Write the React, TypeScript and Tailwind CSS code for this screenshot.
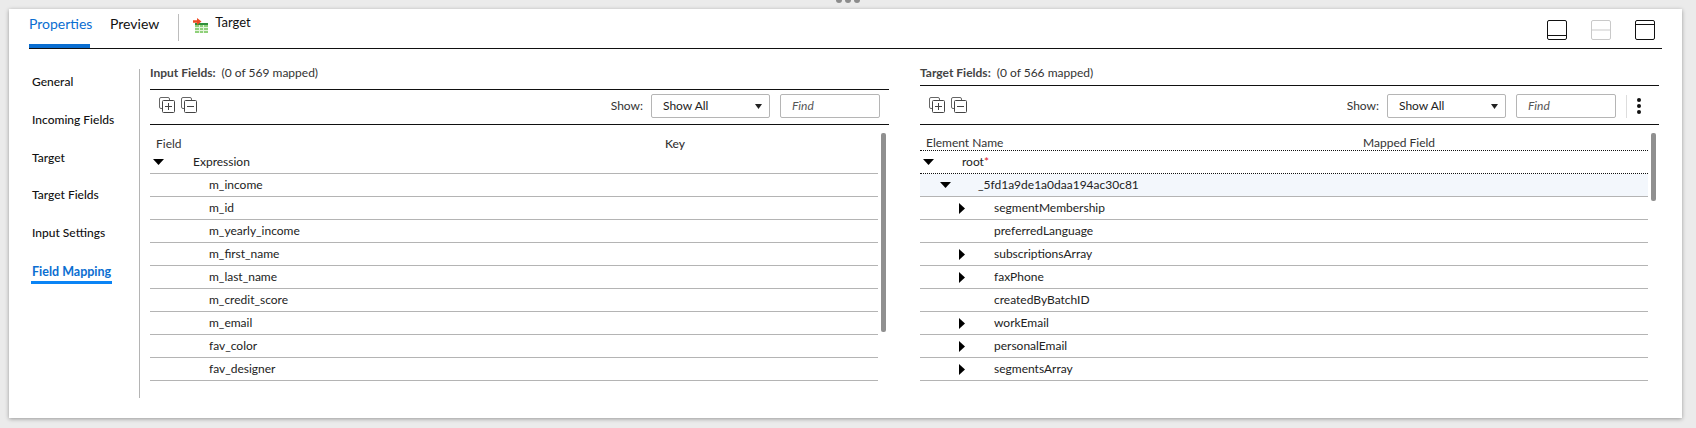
import React from "react";

const font = { fontFamily: "Lato, 'Open Sans', sans-serif" };

function ToolIcon({ minus }: { minus?: boolean }) {
  return (
    <svg width="16" height="16" viewBox="0 0 16 16" fill="none" stroke="#444" strokeWidth="1">
      <path d="M3.5 11.5H2a1.5 1.5 0 0 1-1.5-1.5V2A1.5 1.5 0 0 1 2 .5h7A1.5 1.5 0 0 1 10.5 2v1.5" stroke="#666" />
      <rect x="3.5" y="3.5" width="12" height="12" rx="1" fill="#fff" />
      <path d="M6 9.5h7" />
      {!minus && <path d="M9.5 6v7" />}
    </svg>
  );
}

function Down() {
  return (
    <svg width="11" height="6" viewBox="0 0 11 6">
      <path d="M0 0h11L5.5 6z" fill="#000" />
    </svg>
  );
}

function Right() {
  return (
    <svg width="6" height="11" viewBox="0 0 6 11">
      <path d="M0 0v11l6-5.5z" fill="#000" />
    </svg>
  );
}

function LayoutIcon({ kind }: { kind: "bottom" | "mid" | "top" }) {
  const c = kind === "mid" ? "#c9c9c9" : "#111";
  const y = kind === "bottom" ? 15.5 : kind === "mid" ? 10 : 4.5;
  return (
    <svg width="20" height="20" viewBox="0 0 20 20" fill="none" stroke={c} strokeWidth="1">
      <rect x="0.5" y="0.5" width="19" height="19" rx="1.5" />
      <path d={`M0.5 ${y}H19.5`} />
    </svg>
  );
}

function TargetIcon() {
  return (
    <svg width="15" height="15" viewBox="0 0 15 15">
      <rect x="2" y="5" width="13" height="10" fill="#8fd07a" />
      <rect x="2" y="5" width="13" height="2" fill="#2f8f3a" />
      <path d="M2 9.5h13M2 12.5h13M6.5 7v8M10.5 7v8" stroke="#e4f4dc" strokeWidth="1" />
      <path d="M0 2.2h4V0l4.5 3.5L4 7V4.8H0z" fill="#ee4b23" />
    </svg>
  );
}

function Select({ label }: { label: string }) {
  return (
    <div className="flex items-center">
      <span className="text-[12px] text-[#333] mr-[8px]">{label}</span>
      <div className="w-[119px] h-[24px] border border-[#b5b5b5] rounded-[2px] flex items-center justify-between pl-[11px] pr-[7px] text-[12px] text-[#222]">
        <span>Show All</span>
        <svg width="7" height="5" viewBox="0 0 7 5">
          <path d="M0 0h7L3.5 5z" fill="#222" />
        </svg>
      </div>
    </div>
  );
}

function Find() {
  return (
    <div className="w-[100px] h-[24px] ml-[10px] border border-[#b5b5b5] rounded-[2px] flex items-center pl-[11px] text-[12px] italic text-[#555]">
      Find
    </div>
  );
}

function Toolbar({ extra, headerH }: { extra?: boolean; headerH: string }) {
  return (
    <>
      <div className={`${headerH} border-b border-[#111] text-[12px] text-[#333]`}>
        <div className="pt-[1px] leading-[16px]">
          <span className="font-bold text-[#444]">{extra ? "Target Fields:" : "Input Fields:"}</span>
          <span className="ml-[6px]">{extra ? "(0 of 566 mapped)" : "(0 of 569 mapped)"}</span>
        </div>
      </div>
      <div className={`${extra ? "h-[39px] pt-[8px]" : "h-[35px] pt-[4px]"} border-b border-[#111] flex items-start`}>
        <div className="flex gap-[6px] ml-[9px] mt-[3px]">
          <ToolIcon />
          <ToolIcon minus />
        </div>
        <div className={`ml-auto flex items-center ${extra ? "" : "mr-[9px]"}`}>
          <Select label="Show:" />
          <Find />
          {extra && (
            <>
              <div className="w-px h-[23px] bg-[#ddd] ml-[10px]" />
              <svg width="4" height="16" viewBox="0 0 4 16" className="ml-[10px] mr-[18px]">
                <circle cx="2" cy="2" r="2" fill="#111" />
                <circle cx="2" cy="8" r="2" fill="#111" />
                <circle cx="2" cy="14" r="2" fill="#111" />
              </svg>
            </>
          )}
        </div>
      </div>
    </>
  );
}

const inputRows = ["m_income", "m_id", "m_yearly_income", "m_first_name", "m_last_name", "m_credit_score", "m_email", "fav_color", "fav_designer"];
const targetRows: [string, boolean][] = [
  ["segmentMembership", true],
  ["preferredLanguage", false],
  ["subscriptionsArray", true],
  ["faxPhone", true],
  ["createdByBatchID", false],
  ["workEmail", true],
  ["personalEmail", true],
  ["segmentsArray", true],
];

function Row({ children, cls = "" }: { children: React.ReactNode; cls?: string }) {
  return (
    <div className={`h-[23px] border-b border-[#b4b4b4] flex items-center text-[12px] text-[#222] ${cls}`}>{children}</div>
  );
}

export default function App() {
  const side = ["General", "Incoming Fields", "Target", "Target Fields", "Input Settings"];
  return (
    <div className="relative h-[428px] w-[1696px] bg-[#ebebeb] pt-[9px] pl-[9px] pr-[14px] pb-[10px] overflow-hidden" style={font}>
      <div className="absolute top-0 left-[836px] flex gap-[3px]">
        <div className="w-[6px] h-[3px] rounded-b-full bg-[#8c8c8c]" />
        <div className="w-[6px] h-[3px] rounded-b-full bg-[#8c8c8c]" />
        <div className="w-[6px] h-[3px] rounded-b-full bg-[#8c8c8c]" />
      </div>
      <div className="h-full bg-white shadow-[0_1px_4px_rgba(0,0,0,0.35)] flex flex-col pl-[20px] pr-[20px]">
        <div className="h-[40px] border-b border-[#111] flex items-start shrink-0">
          <div className="h-[39px] w-[61px] border-b-[4px] border-[#0a6ed1] text-[14px] text-[#0a6ed1] pt-[5px] leading-[20px]">Properties</div>
          <div className="ml-[20px] text-[14px] text-[#111] pt-[5px] leading-[20px]">Preview</div>
          <div className="ml-[19px] mt-[5px] w-px h-[27px] bg-[#bdbdbd]" />
          <div className="ml-[14px] mt-[9px]"><TargetIcon /></div>
          <div className="ml-[7px] text-[13px] text-[#111] pt-[3px] leading-[20px]">Target</div>
          <div className="ml-auto flex gap-[24px] mt-[11px] mr-[7px]">
            <LayoutIcon kind="bottom" />
            <LayoutIcon kind="mid" />
            <LayoutIcon kind="top" />
          </div>
        </div>
        <div className="flex pt-[20px] flex-1">
          <div className="w-[111px] h-[329px] border-r border-[#b4b4b4] pl-[3px] shrink-0 text-[12px] font-medium text-[#111]">
            <div className="flex flex-col gap-[21.75px] pt-[5px]">
              {side.map((s) => (
                <div key={s} className="h-[16px] leading-[16px]">{s}</div>
              ))}
              <div className="h-[16px] leading-[16px] pt-[1px]">
                <span className="inline-block text-[12.5px] font-bold text-[#0a6ed1] border-b-[3px] border-[#0a84f5] pb-[1px] -ml-[1px] px-[1px]">Field Mapping</span>
              </div>
            </div>
          </div>
          {/* Input panel */}
          <div className="ml-[10px] -mt-[5px] w-[739px] shrink-0">
            <Toolbar headerH="h-[26px]" />
            <div className="relative">
              <div className="absolute left-[731px] top-[8px] w-[5px] h-[199px] rounded-[2px] bg-[#909090]" />
              <div className="w-[728px]">
                <div className="h-[26px] relative text-[12px] text-[#333]">
                  <span className="absolute left-[6px] top-[11px] leading-[16px]">Field</span>
                  <span className="absolute left-[515px] top-[11px] leading-[16px] font-medium">Key</span>
                </div>
                <Row>
                  <span className="ml-[3px] w-[40px]"><Down /></span>
                  <span>Expression</span>
                </Row>
                {inputRows.map((r) => (
                  <Row key={r}><span className="ml-[59px]">{r}</span></Row>
                ))}
              </div>
            </div>
          </div>
          {/* Target panel */}
          <div className="ml-[31px] -mt-[5px] w-[739px] shrink-0">
            <Toolbar extra headerH="h-[22px]" />
            <div className="relative">
              <div className="absolute left-[731px] top-[8px] w-[5px] h-[68px] rounded-[2px] bg-[#909090]" />
              <div className="w-[728px]">
                <div className="h-[26px] relative text-[12px] text-[#333] border-b border-dotted border-[#111]">
                  <span className="absolute left-[6px] top-[10px] leading-[16px]">Element Name</span>
                  <span className="absolute left-[443px] top-[10px] leading-[16px]">Mapped Field</span>
                </div>
                <div className="h-[23px] border-b border-dotted border-[#111] flex items-center text-[12px] text-[#222]">
                  <span className="ml-[3px] w-[39px]"><Down /></span>
                  <span>root<span className="text-[#e0202c]">*</span></span>
                </div>
                <Row cls="bg-[#f3f7fc]">
                  <span className="ml-[20px] w-[38px]"><Down /></span>
                  <span>_5fd1a9de1a0daa194ac30c81</span>
                </Row>
                {targetRows.map(([r, arrow]) => (
                  <Row key={r}>
                    <span className="ml-[39px] w-[35px]">{arrow && <Right />}</span>
                    <span>{r}</span>
                  </Row>
                ))}
              </div>
            </div>
          </div>
        </div>
      </div>
    </div>
  );
}
